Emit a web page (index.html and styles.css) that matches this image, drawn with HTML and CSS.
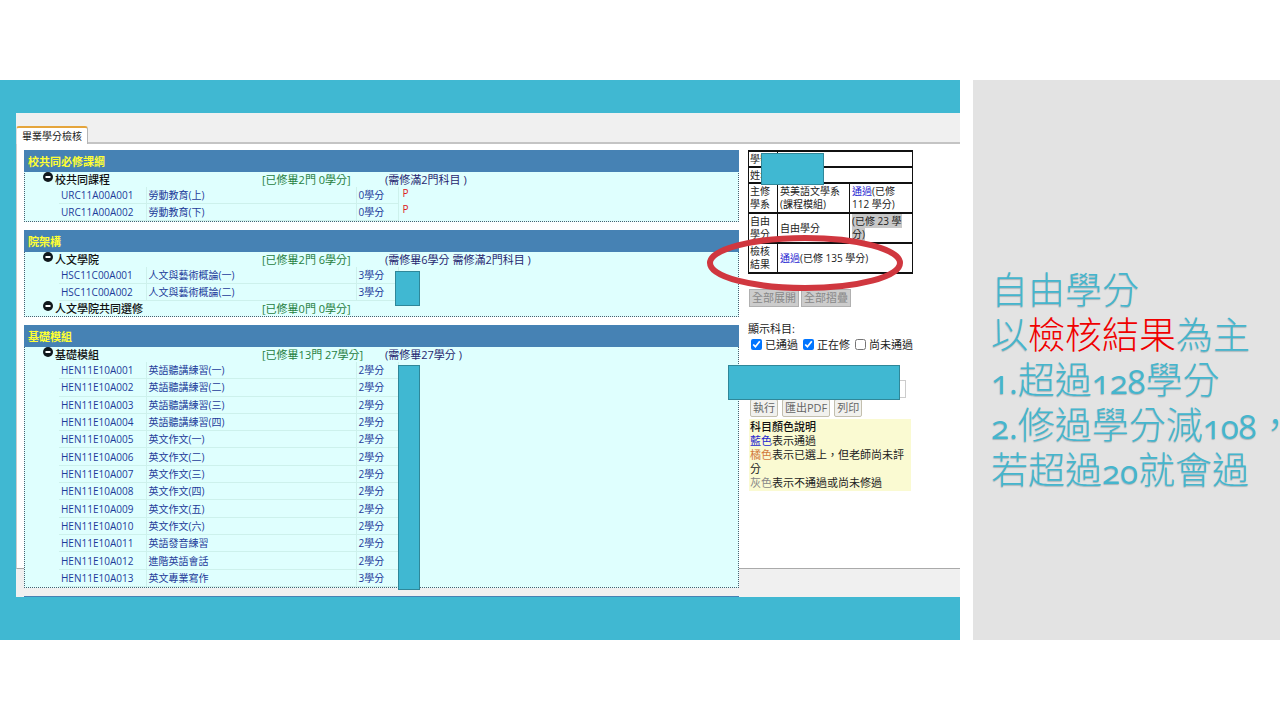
FILE: index.html
```html
<!DOCTYPE html>
<html lang="zh-Hant">
<head>
<meta charset="utf-8">
<title>畢業學分檢核</title>
<link rel="stylesheet" href="styles.css">
</head>
<body>
<div class="slide">
  <main class="stage">
    <div class="shot">
      <nav class="tabs"><button class="tab" type="button">畢業學分檢核</button></nav>
      <div class="content">
        <div class="modules">
          <section class="module">
            <h2 class="module-title">校共同必修課綱</h2>
            <div class="group"><svg class="fold" viewBox="0 0 10 10"><circle cx="5" cy="5" r="5" fill="#10181c"/><path d="M2.5 5h5" stroke="#fff" stroke-width="2"/></svg><span class="group-name">校共同課程</span><span class="done">[已修畢2門 0學分]</span><span class="need">(需修滿2門科目 )</span></div>
            <table class="courses">
              <tr><td class="code">URC11A00A001</td><td class="name">勞動教育(上)</td><td class="credit">0學分</td><td class="grade">P</td></tr>
              <tr><td class="code">URC11A00A002</td><td class="name">勞動教育(下)</td><td class="credit">0學分</td><td class="grade">P</td></tr>
            </table>
          </section>
          <section class="module">
            <h2 class="module-title">院架構</h2>
            <div class="group"><svg class="fold" viewBox="0 0 10 10"><circle cx="5" cy="5" r="5" fill="#10181c"/><path d="M2.5 5h5" stroke="#fff" stroke-width="2"/></svg><span class="group-name">人文學院</span><span class="done">[已修畢2門 6學分]</span><span class="need">(需修畢6學分 需修滿2門科目 )</span></div>
            <table class="courses">
              <tr><td class="code">HSC11C00A001</td><td class="name">人文與藝術概論(一)</td><td class="credit">3學分</td><td class="grade"></td></tr>
              <tr><td class="code">HSC11C00A002</td><td class="name">人文與藝術概論(二)</td><td class="credit">3學分</td><td class="grade"></td></tr>
            </table>
            <div class="group"><svg class="fold" viewBox="0 0 10 10"><circle cx="5" cy="5" r="5" fill="#10181c"/><path d="M2.5 5h5" stroke="#fff" stroke-width="2"/></svg><span class="group-name">人文學院共同選修</span><span class="done">[已修畢0門 0學分]</span></div>
          </section>
          <section class="module">
            <h2 class="module-title">基礎模組</h2>
            <div class="group"><svg class="fold" viewBox="0 0 10 10"><circle cx="5" cy="5" r="5" fill="#10181c"/><path d="M2.5 5h5" stroke="#fff" stroke-width="2"/></svg><span class="group-name">基礎模組</span><span class="done">[已修畢13門 27學分]</span><span class="need">(需修畢27學分 )</span></div>
            <table class="courses courses-long">
              <tr><td class="code">HEN11E10A001</td><td class="name">英語聽講練習(一)</td><td class="credit">2學分</td><td class="grade"></td></tr>
              <tr><td class="code">HEN11E10A002</td><td class="name">英語聽講練習(二)</td><td class="credit">2學分</td><td class="grade"></td></tr>
              <tr><td class="code">HEN11E10A003</td><td class="name">英語聽講練習(三)</td><td class="credit">2學分</td><td class="grade"></td></tr>
              <tr><td class="code">HEN11E10A004</td><td class="name">英語聽講練習(四)</td><td class="credit">2學分</td><td class="grade"></td></tr>
              <tr><td class="code">HEN11E10A005</td><td class="name">英文作文(一)</td><td class="credit">2學分</td><td class="grade"></td></tr>
              <tr><td class="code">HEN11E10A006</td><td class="name">英文作文(二)</td><td class="credit">2學分</td><td class="grade"></td></tr>
              <tr><td class="code">HEN11E10A007</td><td class="name">英文作文(三)</td><td class="credit">2學分</td><td class="grade"></td></tr>
              <tr><td class="code">HEN11E10A008</td><td class="name">英文作文(四)</td><td class="credit">2學分</td><td class="grade"></td></tr>
              <tr><td class="code">HEN11E10A009</td><td class="name">英文作文(五)</td><td class="credit">2學分</td><td class="grade"></td></tr>
              <tr><td class="code">HEN11E10A010</td><td class="name">英文作文(六)</td><td class="credit">2學分</td><td class="grade"></td></tr>
              <tr><td class="code">HEN11E10A011</td><td class="name">英語發音練習</td><td class="credit">2學分</td><td class="grade"></td></tr>
              <tr><td class="code">HEN11E10A012</td><td class="name">進階英語會話</td><td class="credit">2學分</td><td class="grade"></td></tr>
              <tr><td class="code">HEN11E10A013</td><td class="name">英文專業寫作</td><td class="credit">3學分</td><td class="grade"></td></tr>
            </table>
          </section>
          <section class="module"><div class="module-title"></div></section>
        </div>
        <aside class="side">
          <table class="summary">
            <colgroup><col class="key-col"><col class="program-col"><col></colgroup>
            <tr class="short"><td class="key">學號</td><td colspan="2"></td></tr>
            <tr class="short"><td class="key">姓名</td><td colspan="2"></td></tr>
            <tr><td class="key">主修學系</td><td>英美語文學系(課程模組)</td><td><span class="pass">通過</span>(已修 112 學分)</td></tr>
            <tr><td class="key">自由學分</td><td>自由學分</td><td><span class="marked">(已修 23 學分)</span></td></tr>
            <tr><td class="key">檢核結果</td><td colspan="2"><span class="pass">通過</span>(已修 135 學分)</td></tr>
          </table>
          <div class="fold-buttons"><button type="button">全部展開</button><button type="button">全部摺疊</button></div>
          <div class="filter-title">顯示科目:</div>
          <div class="filters">
            <label><input type="checkbox" checked>已通過</label>
            <label><input type="checkbox" checked>正在修</label>
            <label><input type="checkbox">尚未通過</label>
          </div>
          <input class="query" type="text" aria-label="查詢">
          <div class="actions"><button type="button">執行</button><button type="button">匯出PDF</button><button type="button">列印</button></div>
          <div class="legend">
            <div class="legend-title">科目顏色說明</div>
            <div><span class="blue">藍色</span>表示通過</div>
            <div><span class="orange">橘色</span>表示已選上，但老師尚未評分</div>
            <div><span class="gray">灰色</span>表示不通過或尚未修過</div>
          </div>
        </aside>
      </div>
      <div class="cover cover-grades"></div>
      <div class="cover cover-scores"></div>
      <div class="cover cover-student"></div>
      <div class="cover cover-query"></div>
      <svg class="ring" viewBox="0 0 196 58"><ellipse cx="98" cy="29" rx="95" ry="25" fill="none" stroke="#d0373f" stroke-width="6"/></svg>
    </div>
  </main>
  <aside class="note">
    <p>自由學分<br>以<em>檢核結果</em>為主<br><span class="num">1.</span>超過<span class="num">128</span>學分<br><span class="num">2.</span>修過學分減<span class="num">108</span>，<br>若超過<span class="num">20</span>就會過</p>
  </aside>
</div>
</body>
</html>
```
FILE: styles.css
```css
* { box-sizing: border-box; }
body {
  margin: 0;
  background: #fff;
  font-family: "Open Sans", "Noto Sans CJK TC", sans-serif;
  font-size: 10px;
  color: #222;
}
button, input { font-family: inherit; margin: 0; }
.slide {
  display: grid;
  grid-template-columns: minmax(0, 1fr) 307px;
  column-gap: 13px;
  padding: 80px 0;
}
.stage { background: #40b8d2; padding: 33px 0 43px 16px; }
.shot { position: relative; height: 484px; overflow: hidden; background: #f0f0f0; }
.tabs { height: 31px; padding-top: 13px; border-bottom: 2px solid #c4c4c4; }
.tab {
  display: block;
  height: 18px;
  padding: 0 5px;
  border: 1px solid #b5b5b5;
  border-top: 2px solid #e5a53c;
  border-bottom: 0;
  border-left-color: #ddd;
  border-radius: 3px 3px 0 0;
  background: #fff;
  font-size: 10px;
  line-height: 16px;
  color: #222;
}
.content {
  display: flex;
  gap: 9px;
  height: 425px;
  padding: 6px 0 0 7px;
  background: #fff;
  border-left: 1px solid #ccc;
  border-bottom: 1px solid #aaa;
}
.modules { flex: 1; display: flex; flex-direction: column; gap: 8px; }
.module {
  flex: none;
  background: #dffffe;
  border: dotted #4a6070;
  border-width: 0 1px 1px;
}
.module-title {
  height: 22px;
  margin: 0 -1px;
  padding-left: 4px;
  background: #4682b4;
  color: #ff3;
  font-size: 11px;
  line-height: 23px;
  font-weight: 700;
}
.group {
  display: grid;
  grid-template-columns: 12px 207px 123px 1fr;
  height: 15px;
  padding-left: 18px;
  font-size: 11px;
  line-height: 15px;
}
.fold { width: 10px; height: 10px; }
.group-name { color: #111; font-weight: 500; }
.done { color: #268040; }
.need { color: #26266f; }
.courses { margin-left: 34px; border-collapse: collapse; table-layout: fixed; width: 361px; height: 34px; }
.courses-long { height: 225px; }
.courses td { padding: 0 0 0 2px; line-height: 14px; color: #1d3b9a; border-bottom: 1px solid #cdf1ec; border-right: 1px solid #cdf1ec; white-space: nowrap; }
.courses .code { width: 87px; }
.courses .name { width: 210px; }
.courses .credit { width: 42px; }
.courses .grade { padding-left: 4px; border: 0; color: #d22; vertical-align: top; line-height: 12px; }
.side { width: 212px; }
.summary { width: 165px; border-collapse: collapse; table-layout: fixed; }
.summary td { padding: 0 2px; border: 2px solid #111; border-width: 2px 1px; line-height: 13px; height: 30px; color: #222; }
.summary .short td { height: 16px; }
.summary .key { padding: 0 1px; word-break: break-all; }
.summary .short .key { white-space: nowrap; }
.key-col { width: 29px; }
.program-col { width: 72px; }
.pass { color: #1b1bd0; }
.marked { background: #c8c8c8; }
.fold-buttons { display: flex; gap: 2px; margin: 15px 0 0 1px; }
.fold-buttons button { height: 18px; padding: 0 2px; border: 1px solid #b0b0b0; background: #ccc; color: #888; font-size: 11px; line-height: 14px; }
.filter-title { margin-top: 15px; font-size: 11px; line-height: 14px; }
.filters { display: flex; gap: 5px; height: 16px; padding-left: 3px; font-size: 11px; white-space: nowrap; }
.filters label { display: flex; align-items: center; gap: 3px; }
.filters input { width: 11px; height: 11px; }
.query { display: block; width: 158px; height: 18px; margin-top: 28px; border: 1px solid #ccc; }
.actions { display: flex; gap: 4px; margin: 1px 0 2px 2px; }
.actions button { height: 18px; padding: 0 2px; border: 1px solid #c3bfae; border-radius: 2px; background: #f1f1ee; color: #666; font-size: 11px; line-height: 14px; }
.legend { width: 162px; margin-left: 1px; padding: 1px; background: #fafad2; font-size: 11px; line-height: 14px; }
.legend-title { color: #111; font-weight: 500; }
.blue { color: #2424d0; }
.orange { color: #d2793c; }
.gray { color: #888; }
.cover { position: absolute; background: #40b8d2; border: 1px solid #2f8799; }
.cover-grades { left: 379px; top: 158px; width: 25px; height: 35px; }
.cover-scores { left: 382px; top: 252px; width: 22px; height: 225px; }
.cover-student { left: 745px; top: 40px; width: 63px; height: 32px; }
.cover-query { left: 712px; top: 252px; width: 172px; height: 35px; }
.ring { position: absolute; left: 691px; top: 121px; width: 196px; height: 58px; }
.note { display: flex; align-items: center; overflow: hidden; padding: 38px 0 0 18px; background: #e3e3e3; }
.note p {
  margin: 0;
  color: #45b5cd;
  font-size: 37px;
  font-weight: 300;
  line-height: 45px;
  white-space: nowrap;
  text-shadow: 0 1px 1px #a8b4b8;
}
.note em { color: #f00000; font-style: normal; text-shadow: none; }
.num { font-size: 33px; font-weight: 400; line-height: 1; font-variant-numeric: oldstyle-nums tabular-nums; }
```
